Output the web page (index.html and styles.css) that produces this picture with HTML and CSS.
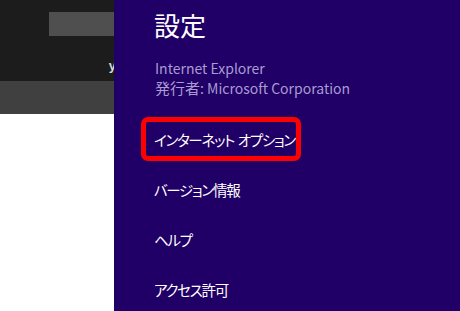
FILE: index.html
```html
<!DOCTYPE html>
<html lang="ja">
<head>
<meta charset="utf-8">
<link rel="stylesheet" href="styles.css">
</head>
<body>
<div class="page">
  <div class="backdrop">
    <div class="top">
      <div class="addr"></div>
      <div class="cut">y</div>
    </div>
    <div class="band"></div>
    <div class="blank"></div>
  </div>
  <div class="charm">
    <h1 class="title">設定</h1>
    <div class="info">
      <div class="info-line">Internet Explorer</div>
      <div class="info-line"><span class="kanji">発行者</span>: Microsoft Corporation</div>
    </div>
    <ul class="menu">
      <li class="item item-selected">インターネット<span class="gap"> </span>オプション</li>
      <li class="item">バージョン情報</li>
      <li class="item">ヘルプ</li>
      <li class="item">アクセス許可</li>
    </ul>
  </div>
</div>
</body>
</html>
```
FILE: styles.css
```css
html, body {
  margin: 0;
  padding: 0;
  width: 460px;
  height: 311px;
  overflow: hidden;
}
.page {
  display: flex;
  width: 460px;
  height: 311px;
  font-family: "Noto Sans CJK JP", "Noto Sans", sans-serif;
}
.backdrop {
  width: 114px;
  display: flex;
  flex-direction: column;
}
.top {
  height: 81px;
  background: #1c1c1c;
  padding-top: 12px;
  box-sizing: border-box;
}
.addr {
  margin-left: 49px;
  height: 24px;
  background: #4f4f4f;
}
.cut {
  margin-top: 22px;
  text-align: right;
  color: #d8d8d8;
  font-family: "Liberation Sans", sans-serif;
  font-weight: bold;
  font-size: 13px;
  line-height: 16px;
  margin-right: -2px;
}
.band {
  height: 33px;
  background: #404040;
}
.blank {
  flex: 1;
  background: #ffffff;
}
.charm {
  flex: 1;
  background: #200066;
  padding-left: 27px;
  display: flex;
  flex-direction: column;
}
.title {
  margin: 0;
  padding-top: 9px;
  height: 50px;
  box-sizing: border-box;
  font-weight: normal;
  font-size: 26px;
  line-height: 32px;
  color: #ffffff;
  padding-left: 13px;
  font-feature-settings: "palt";
}
.info {
  padding-left: 14px;
  color: #a99bd3;
  font-size: 14px;
  line-height: 19px;
  padding-top: 12px;
}
.kanji {
  font-size: 15px;
}
.menu {
  list-style: none;
  margin: 19px 0 0;
  padding: 0;
  display: flex;
  flex-direction: column;
  gap: 6px;
}
.item {
  width: 160px;
  height: 44px;
  box-sizing: border-box;
  border: 5px solid transparent;
  border-radius: 7px;
  padding-left: 8px;
  color: #ffffff;
  font-size: 14.5px;
  line-height: 36px;
  letter-spacing: -1.3px;
  white-space: nowrap;
  font-feature-settings: "palt";
}
.gap {
  letter-spacing: 0.5px;
}
.item-selected {
  border-color: #ff0000;
}
```
